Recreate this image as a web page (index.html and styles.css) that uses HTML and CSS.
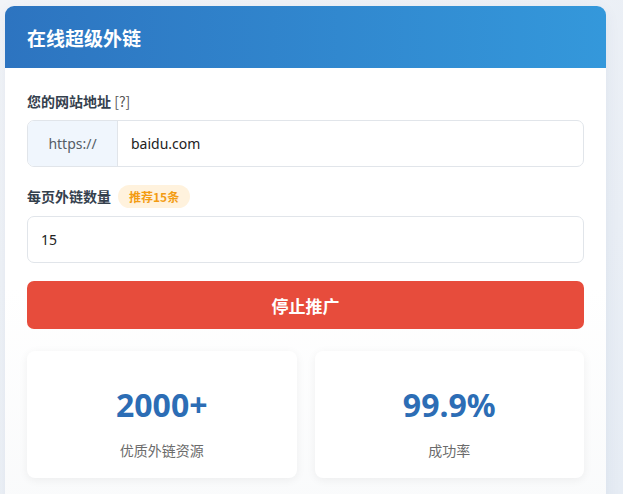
FILE: index.html
```html
<!DOCTYPE html>
<html lang="zh-CN">
<head>
<meta charset="utf-8">
<title>在线超级外链</title>
<link rel="stylesheet" href="styles.css">
</head>
<body>
<div class="card">
  <div class="card-header">在线超级外链</div>
  <div class="card-body">
    <div class="field">
      <div class="label">您的网站地址 <span class="hint">[?]</span></div>
      <div class="input-group">
        <div class="prefix">https://</div>
        <div class="input-value">baidu.com</div>
      </div>
    </div>
    <div class="field">
      <div class="label row">每页外链数量 <span class="badge">推荐15条</span></div>
      <div class="input">15</div>
    </div>
    <button class="btn-stop">停止推广</button>
    <div class="stats">
      <div class="stat">
        <div class="stat-num">2000+</div>
        <div class="stat-label">优质外链资源</div>
      </div>
      <div class="stat">
        <div class="stat-num">99.9%</div>
        <div class="stat-label">成功率</div>
      </div>
    </div>
  </div>
</div>
</body>
</html>
```
FILE: styles.css
```css
* { box-sizing: border-box; }
html, body { height: 100%; }
body {
  margin: 0;
  padding: 6px 17px 0 5px;
  background: linear-gradient(135deg, #f2f4f8 0%, #e6ecf4 100%);
  font-family: "Noto Sans", "Noto Sans CJK SC", sans-serif;
  overflow: hidden;
}
.card {
  width: 601px;
  border-radius: 9px;
  overflow: hidden;
  background: linear-gradient(180deg, #ffffff 0%, #ffffff 55%, #f9fafb 100%);
  box-shadow: 0 4px 16px rgba(40, 70, 120, 0.06);
}
.card-header {
  height: 62px;
  display: flex;
  align-items: center;
  padding-left: 22px;
  background: linear-gradient(90deg, #2d74c0 0%, #3498db 100%);
  color: #fff;
  font-size: 19px;
  font-weight: 700;
  font-family: "Noto Sans CJK SC", sans-serif;
}
.card-body {
  padding: 24px 22px 40px;
}
.field { margin-bottom: 18px; }
.label {
  font-size: 14px;
  font-weight: 700;
  color: #34404d;
  line-height: 18px;
  margin-bottom: 10px;
  font-family: "Noto Sans CJK SC", sans-serif;
}
.label.row {
  display: flex;
  align-items: center;
  gap: 7px;
  line-height: 23px;
  margin-bottom: 8px;
}
.hint { font-weight: 400; color: #555; }
.badge {
  display: inline-block;
  height: 23px;
  line-height: 23px;
  padding: 0 11px;
  border-radius: 12px;
  background: #fff2dd;
  color: #f39c12;
  font-size: 12px;
  font-weight: 700;
}
.input-group {
  display: flex;
  height: 47px;
  border: 1px solid #e1e5ea;
  border-radius: 7px;
  overflow: hidden;
  background: #fff;
}
.prefix {
  width: 90px;
  display: flex;
  align-items: center;
  justify-content: center;
  background: #f0f6fd;
  border-right: 1px solid #e1e5ea;
  color: #555d66;
  font-size: 14px;
}
.input-value {
  flex: 1;
  display: flex;
  align-items: center;
  padding-left: 13px;
  color: #222;
  font-size: 14px;
}
.input {
  height: 47px;
  display: flex;
  align-items: center;
  padding-left: 13px;
  border: 1px solid #e1e5ea;
  border-radius: 7px;
  background: #fff;
  color: #222;
  font-size: 14px;
}
.btn-stop {
  display: block;
  width: 100%;
  height: 48px;
  border: none;
  border-radius: 7px;
  background: #e74c3c;
  color: #fff;
  font-size: 17px;
  font-weight: 700;
  font-family: "Noto Sans CJK SC", sans-serif;
  margin: 0;
}
.stats {
  margin-top: 22px;
  display: grid;
  grid-template-columns: 1fr 1fr;
  gap: 18px;
}
.stat {
  background: #fff;
  border-radius: 8px;
  box-shadow: 0 2px 10px rgba(0, 0, 0, 0.06);
  padding: 32px 0 18px;
  text-align: center;
}
.stat-num {
  font-size: 32px;
  font-weight: 700;
  line-height: 44px;
  color: #2c6db5;
}
.stat-label {
  margin-top: 13px;
  font-size: 14px;
  line-height: 20px;
  color: #6b6b6b;
  font-family: "Noto Sans CJK SC", sans-serif;
}
```
